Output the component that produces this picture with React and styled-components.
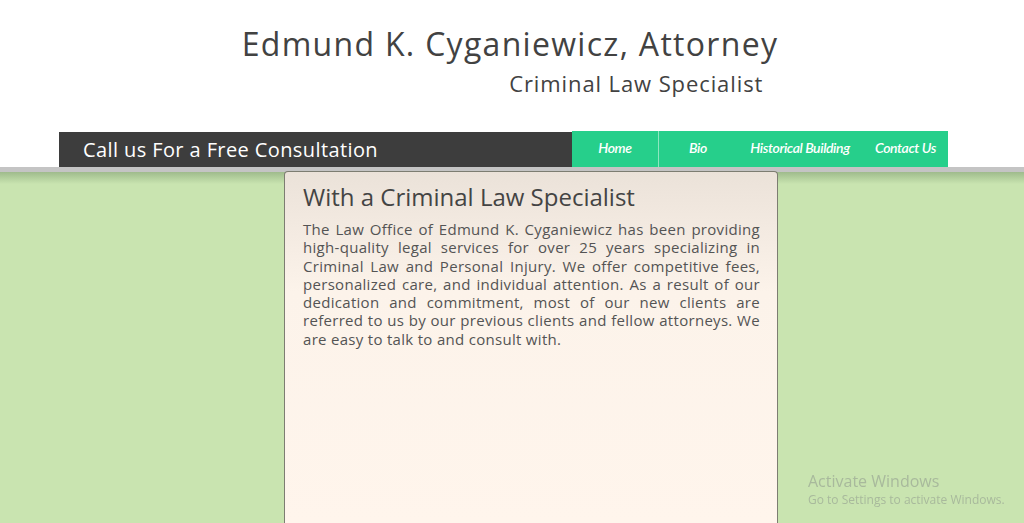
import styled, { createGlobalStyle } from 'styled-components';

/* ---------------------------------- style --------------------------------- */
const GlobalStyle = createGlobalStyle`
  html, body {
    margin: 0;
    padding: 0;
    height: 100%;
    background: #c9e4b0;
    font-family: 'Open Sans', sans-serif;
  }
  #root {
    min-height: 100%;
    display: flex;
    flex-direction: column;
  }
`;

const Page = styled.div`
  flex: 1;
  display: flex;
  flex-direction: column;
  height: 523px;
  overflow: hidden;
`;

const Header = styled.header`
  background: #fff;
  display: flex;
  flex-direction: column;
  align-items: center;
  padding-top: 22px;
`;

const TitleBlock = styled.div`
  display: flex;
  flex-direction: column;
  align-items: flex-end;
  margin-left: -4px;
  height: 109px;
`;

const Title = styled.h1`
  margin: 0;
  font-family: 'Open Sans', sans-serif;
  font-weight: 400;
  font-size: 32px;
  line-height: 44px;
  letter-spacing: 1.3px;
  color: #424242;
`;

const Subtitle = styled.h2`
  margin: 0 15px 0 0;
  font-family: 'Open Sans', sans-serif;
  font-weight: 400;
  font-size: 22px;
  line-height: 34px;
  letter-spacing: 0.9px;
  color: #424242;
`;

const NavRow = styled.div`
  display: flex;
  align-items: flex-end;
  margin-left: 59px;
  width: 889px;
  align-self: flex-start;
`;

const CallBar = styled.div`
  flex: 1;
  height: 35px;
  background: #3d3d3d;
  color: #fff;
  font-family: 'Open Sans', sans-serif;
  font-size: 20px;
  letter-spacing: 0.4px;
  display: flex;
  align-items: center;
  padding-left: 24px;
`;

const Nav = styled.nav`
  display: flex;
  height: 36px;
  background: #26cf8b;
`;

const NavItem = styled.a`
  width: ${(p) => p.$w}px;
  display: flex;
  align-items: center;
  justify-content: center;
  color: #fff;
  font-family: Lato, sans-serif;
  font-style: italic;
  font-weight: 600;
  font-size: 14px;
  letter-spacing: -0.4px;
  text-decoration: none;
  padding-bottom: 3px;
  box-sizing: border-box;
  border-right: ${(p) => (p.$divider ? '1px solid #8ee6c0' : 'none')};
`;

const Band = styled.div`
  height: 5px;
  background: #c4c4c4;
`;

const Main = styled.main`
  flex: 1;
  display: flex;
  justify-content: center;
  background: linear-gradient(#9fbb8c 0px, #c9e4b0 12px, #c9e4b0 100%);
  padding-left: 38px;
`;

const Card = styled.section`
  width: 494px;
  box-sizing: border-box;
  margin-top: -1px;
  border: 1px solid #7d7d72;
  border-bottom: none;
  border-radius: 4px 4px 0 0;
  background: linear-gradient(#ebe2d9 0px, #fcf3ea 120px, #fff5ec 100%);
  padding: 9px 17px 0 18px;
`;

const CardTitle = styled.h3`
  margin: 0;
  font-family: 'Open Sans', sans-serif;
  font-weight: 400;
  font-size: 24px;
  line-height: 32px;
  color: #444;
`;

const CardText = styled.p`
  margin: 7px 0 0;
  font-family: 'Open Sans', sans-serif;
  font-size: 15px;
  line-height: 18.3px;
  letter-spacing: 0.3px;
  color: #545454;
  text-align: justify;
`;

const Watermark = styled.div`
  position: fixed;
  left: 808px;
  top: 471px;
  font-family: 'Open Sans', sans-serif;
  color: #a8b99c;
  pointer-events: none;
`;

const WatermarkTitle = styled.div`
  font-size: 16px;
  line-height: 20px;
`;

const WatermarkSub = styled.div`
  font-size: 12px;
  line-height: 18px;
`;

/* -------------------------------- component ------------------------------- */
const navLinks = [
  { label: 'Home', w: 87, divider: true },
  { label: 'Bio', w: 78 },
  { label: 'Historical Building', w: 126 },
  { label: 'Contact Us', w: 85 },
];

function App() {
  return (
    <Page>
      <GlobalStyle />
      <Header>
        <TitleBlock>
          <Title>Edmund K. Cyganiewicz, Attorney</Title>
          <Subtitle>Criminal Law Specialist</Subtitle>
        </TitleBlock>
        <NavRow>
          <CallBar>Call us For a Free Consultation</CallBar>
          <Nav>
            {navLinks.map((l) => (
              <NavItem key={l.label} href="#" $w={l.w} $divider={l.divider}>
                {l.label}
              </NavItem>
            ))}
          </Nav>
        </NavRow>
      </Header>
      <Band />
      <Main>
        <Card>
          <CardTitle>With a Criminal Law Specialist</CardTitle>
          <CardText>
            The Law Office of Edmund K. Cyganiewicz has been providing
            high-quality legal services for over 25 years specializing in
            Criminal Law and Personal Injury. We offer competitive fees,
            personalized care, and individual attention. As a result of our
            dedication and commitment, most of our new clients are referred to
            us by our previous clients and fellow attorneys. We are easy to talk
            to and consult with.
          </CardText>
        </Card>
      </Main>
      <Watermark>
        <WatermarkTitle>Activate Windows</WatermarkTitle>
        <WatermarkSub>Go to Settings to activate Windows.</WatermarkSub>
      </Watermark>
    </Page>
  );
}

export default App;
